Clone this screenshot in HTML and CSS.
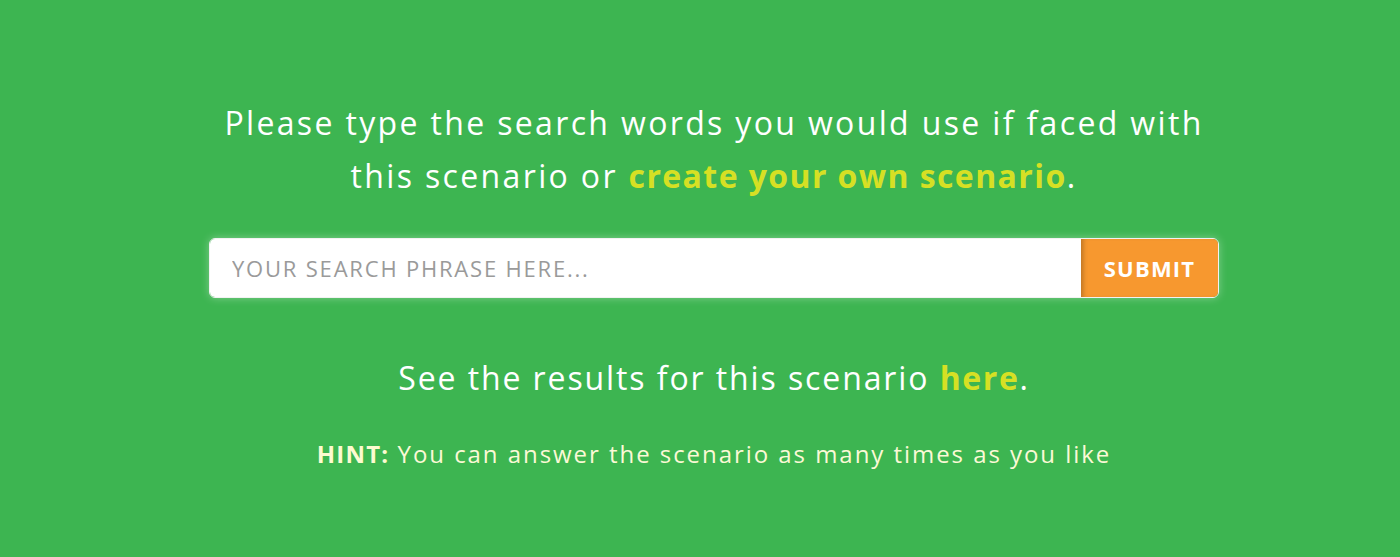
FILE: index.html
```html
<!DOCTYPE html>
<html lang="en">
<head>
    <meta charset="UTF-8">
    <meta name="viewport" content="width=device-width, initial-scale=1.0">
    <title>Scenario Search</title>
    <link rel="stylesheet" href="styles.css">
</head>
<body>
    <div class="page">
        <div class="container">
            <p class="intro">Please type the search words you would use if faced with<br>this scenario or <a href="#" class="link">create your own scenario</a>.</p>
            <form class="search-form">
                <input type="text" class="search-input" placeholder="YOUR SEARCH PHRASE HERE...">
                <button type="submit" class="submit-btn">SUBMIT</button>
            </form>
            <p class="results">See the results for this scenario <a href="#" class="link">here</a>.</p>
            <p class="hint"><strong>HINT:</strong> You can answer the scenario as many times as you like</p>
        </div>
    </div>
</body>
</html>
```

FILE: styles.css
```css
body {
    font-family: "Open Sans", Lato, sans-serif;
    margin: 0;
    padding: 0;
    background-color: #3db551;
    color: #fff;
}
.page {
    padding: 96px 0 0 28px;
    height: 461px;
}
.container {
    width: 1010px;
    margin: 0 auto;
    text-align: center;
}
.intro {
    font-size: 32px;
    line-height: 53px;
    letter-spacing: 2.35px;
    margin: 0 -40px;
}
.intro .link {
    letter-spacing: 1.4px;
}
.link {
    color: #d6e024;
    font-weight: bold;
    text-decoration: none;
    letter-spacing: 1.6px;
}
.search-form {
    display: flex;
    margin-top: 36px;
    height: 60px;
    border: 1px solid #f2f2f2;
    border-radius: 6px;
    overflow: hidden;
    box-shadow: 0 0 8px rgba(255, 255, 255, 0.35);
    box-sizing: border-box;
}
.search-input {
    flex: 1;
    border: none;
    padding: 0 22px;
    font-family: inherit;
    font-size: 22px;
    letter-spacing: 1.8px;
    color: #555;
    outline: none;
}
.search-input::placeholder {
    color: #9a9a9a;
}
.submit-btn {
    width: 137px;
    border: none;
    background-color: #f7982f;
    color: #fff;
    font-family: inherit;
    font-size: 22px;
    font-weight: bold;
    letter-spacing: 1.2px;
    cursor: pointer;
    box-shadow: inset 5px 0 5px -3px rgba(0, 0, 0, 0.25);
}
.results {
    font-size: 32px;
    letter-spacing: 1.9px;
    margin: 58px 0 0;
}
.hint {
    font-size: 24px;
    letter-spacing: 1.95px;
    margin: 38px 0 0;
    color: #fbf9d6;
}
.hint strong {
    color: #fdfbd0;
    letter-spacing: 1.2px;
}
```
